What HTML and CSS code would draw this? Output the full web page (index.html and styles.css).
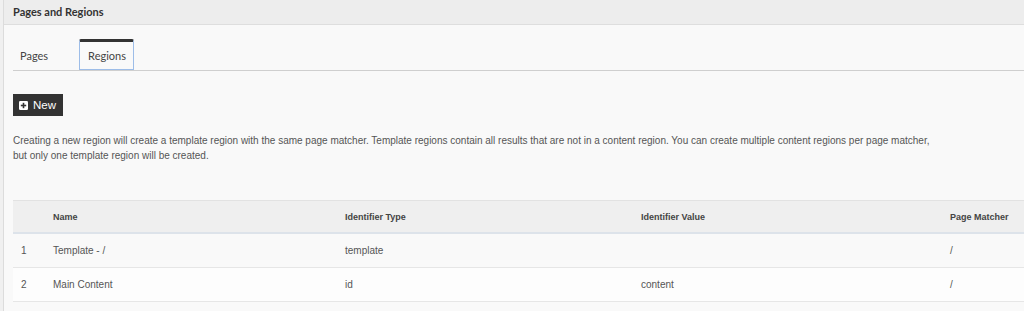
FILE: index.html
```html
<!DOCTYPE html>
<html lang="en">
<head>
  <meta charset="UTF-8">
  <title>Pages and Regions</title>
  <link rel="stylesheet" href="styles.css">
</head>
<body>
  <div class="panel">
    <header class="panel-heading">Pages and Regions</header>

    <div class="panel-body">
      <ul class="tabs">
        <li class="tab">Pages</li>
        <li class="tab active">Regions</li>
      </ul>

      <button type="button" class="btn-new">
        <span class="plus-icon">
          <svg width="9" height="9" viewBox="0 0 9 9">
            <rect x="0" y="0" width="9" height="9" rx="1.2" fill="#fff"/>
            <rect x="3.7" y="1.8" width="1.6" height="5.4" fill="#333"/>
            <rect x="1.8" y="3.7" width="5.4" height="1.6" fill="#333"/>
          </svg>
        </span>
        New
      </button>

      <p class="help">
        Creating a new region will create a template region with the same page matcher. Template regions contain all results that are not in a content region. You can create multiple content regions per page matcher,<br>
        but only one template region will be created.
      </p>

      <div class="table-wrap">
        <table class="region-table">
          <colgroup>
            <col class="col-num">
            <col class="col-name">
            <col class="col-type">
            <col class="col-value">
            <col>
          </colgroup>
          <thead>
            <tr>
              <th></th>
              <th>Name</th>
              <th>Identifier Type</th>
              <th>Identifier Value</th>
              <th>Page Matcher</th>
            </tr>
          </thead>
          <tbody>
            <tr>
              <td>1</td>
              <td>Template - /</td>
              <td>template</td>
              <td></td>
              <td>/</td>
            </tr>
            <tr>
              <td>2</td>
              <td>Main Content</td>
              <td>id</td>
              <td>content</td>
              <td>/</td>
            </tr>
          </tbody>
        </table>
      </div>
    </div>
  </div>
</body>
</html>
```

FILE: styles.css
```css
body {
  margin: 0;
  background-color: #f0f0f0;
  font-family: "Liberation Sans", Arial, sans-serif;
  overflow: hidden;
}

.panel {
  margin-left: 3px;
  border-left: 1px solid #dcdcdc;
  background-color: #f9f9f9;
  min-height: 311px;
}

.panel-heading {
  height: 24px;
  line-height: 24px;
  padding-left: 9px;
  background-color: #ededed;
  border-bottom: 1px solid #dedede;
  font-family: Lato, sans-serif;
  font-weight: bold;
  font-size: 11px;
  color: #333;
}

.panel-body {
  padding: 14px 0 0 9px;
}

.tabs {
  display: flex;
  list-style: none;
  margin: 0;
  padding: 0;
  border-bottom: 1px solid #cfcfcf;
  font-family: Lato, sans-serif;
  font-size: 11px;
  color: #444;
}

.tab {
  height: 30px;
  line-height: 34px;
  padding: 0 7px;
  margin-right: 24px;
}

.tab.active {
  height: 27px;
  line-height: 28px;
  padding: 0 7px 0 8px;
  border: 1px solid #9dbde8;
  border-top: 3px solid #333;
  border-radius: 2px 2px 0 0;
}

.btn-new {
  display: flex;
  align-items: center;
  gap: 5px;
  margin-top: 23px;
  height: 22px;
  padding: 0 7px 0 6px;
  border: none;
  background-color: #333;
  color: #fff;
  font-family: "Liberation Sans", Arial, sans-serif;
  font-size: 11.5px;
}

.plus-icon {
  display: flex;
}

.help {
  margin: 17px 0 0;
  font-size: 10px;
  line-height: 15px;
  color: #555;
}

.table-wrap {
  margin-top: 37px;
  overflow: hidden;
}

.region-table {
  width: 1100px;
  table-layout: fixed;
  border-collapse: collapse;
  font-size: 10px;
  color: #555;
}

.col-num { width: 32px; }
.col-name { width: 292px; }
.col-type { width: 296px; }
.col-value { width: 309px; }

.region-table th {
  height: 31px;
  padding: 0 8px;
  text-align: left;
  font-size: 9px;
  color: #444;
  background-color: #efefef;
  border-top: 1px solid #e2e2e2;
  border-bottom: 2px solid #dde3ea;
}

.region-table td {
  height: 33px;
  padding: 0 8px;
  border-bottom: 1px solid #e6e6e6;
}

.region-table tbody tr:nth-child(odd) {
  background-color: #f9f9f9;
}

.region-table tbody tr:nth-child(even) {
  background-color: #fdfdfd;
}
```
